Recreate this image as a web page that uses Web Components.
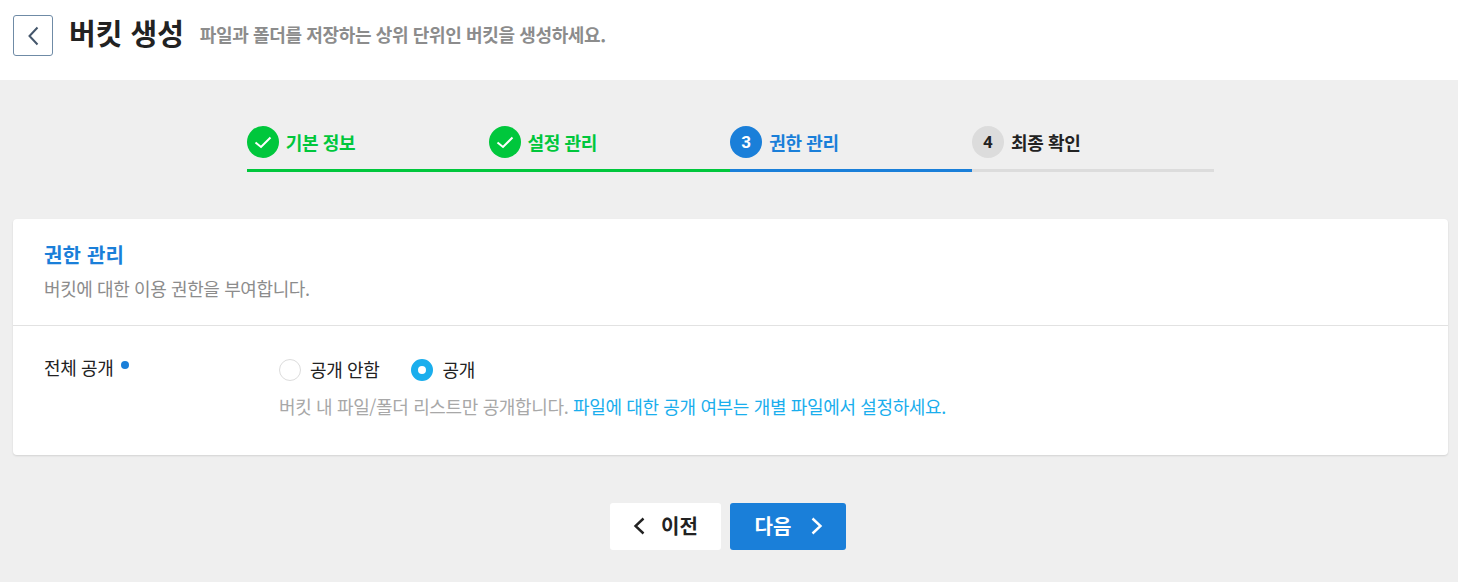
<!DOCTYPE html>
<html lang="ko">
<head>
<meta charset="utf-8">
<title>버킷 생성</title>
<style>
    html, body { margin: 0; padding: 0; }
    body {
        width: 1458px;
        height: 582px;
        overflow: hidden;
        background: #efefef;
        color: #222;
        font-family: "Noto Sans CJK KR", "Noto Sans", sans-serif;
    }
</style>
</head>
<body>
<page-header heading="버킷 생성" sub="파일과 폴더를 저장하는 상위 단위인 버킷을 생성하세요."></page-header>
<step-bar>
    <step-item state="done" num="1">기본 정보</step-item>
    <step-item state="done" num="2">설정 관리</step-item>
    <step-item state="current" num="3">권한 관리</step-item>
    <step-item state="todo" num="4">최종 확인</step-item>
</step-bar>
<form-card heading="권한 관리" sub="버킷에 대한 이용 권한을 부여합니다.">
    <form-row label="전체 공개">
        <radio-item>공개 안함</radio-item>
        <radio-item checked>공개</radio-item>
        <span slot="help">버킷 내 파일/폴더 리스트만 공개합니다. <span style="color:#1aaeed">파일에 대한 공개 여부는 개별 파일에서 설정하세요.</span></span>
    </form-row>
</form-card>
<nav-buttons></nav-buttons>

<script>
class PageHeader extends HTMLElement {
    constructor() {
        super();
        this.attachShadow({ mode: 'open' });
        this.shadowRoot.innerHTML = `
            <style>
                :host {
                    display: flex;
                    align-items: center;
                    height: 80px;
                    box-sizing: border-box;
                    padding: 0 13px 9px;
                    background: #fff;
                }
                .back {
                    display: flex;
                    align-items: center;
                    justify-content: center;
                    width: 40px;
                    height: 41px;
                    box-sizing: border-box;
                    border: 1px solid #6f8ba6;
                    border-radius: 3px;
                    margin-right: 16px;
                }
                h1 {
                    margin: 0 16px 8px 0;
                    font-size: 29px;
                    line-height: 40px;
                    font-weight: 700;
                    color: #222;
                }
                p {
                    margin: 0 0 3px;
                    font-size: 18px;
                    font-weight: 700;
                    letter-spacing: -0.37px;
                    color: #8c8c8c;
                }
            </style>
            <div class="back">
                <svg width="12" height="20" viewBox="0 0 12 20" fill="none" stroke="#44566b" stroke-width="2">
                    <path d="M10.5 1.5 2.5 10l8 8.5"/>
                </svg>
            </div>
            <h1>${this.getAttribute('heading')}</h1>
            <p>${this.getAttribute('sub')}</p>
        `;
    }
}

class StepBar extends HTMLElement {
    constructor() {
        super();
        this.attachShadow({ mode: 'open' });
        this.shadowRoot.innerHTML = `
            <style>
                :host {
                    display: grid;
                    grid-template-columns: repeat(4, 1fr);
                    width: 967px;
                    margin: 46px 0 0 246.75px;
                }
            </style>
            <slot></slot>
        `;
    }
}

class StepItem extends HTMLElement {
    constructor() {
        super();
        const state = this.getAttribute('state');
        const colors = {
            done: ['#00c73c', '#00c73c', '#00c73c'],
            current: ['#1a7fd9', '#1a7fd9', '#1a7fd9'],
            todo: ['#dcdcdc', '#222', '#dcdcdc']
        }[state];
        const mark = state === 'done'
            ? `<svg width="18" height="13" viewBox="0 0 18 13" fill="none" stroke="#fff" stroke-width="2"><path d="M1.5 6.5 7 11 16.5 1.5"/></svg>`
            : this.getAttribute('num');
        this.attachShadow({ mode: 'open' });
        this.shadowRoot.innerHTML = `
            <style>
                :host {
                    display: flex;
                    align-items: center;
                    gap: 7px;
                    height: 46px;
                    padding-bottom: 11px;
                    box-sizing: border-box;
                    border-bottom: 3px solid ${colors[2]};
                    font-size: 18px;
                    font-weight: 700;
                    letter-spacing: -0.38px;
                    color: ${colors[1]};
                }
                .dot {
                    display: flex;
                    align-items: center;
                    justify-content: center;
                    width: 32px;
                    height: 32px;
                    border-radius: 50%;
                    background: ${colors[0]};
                    color: ${state === 'todo' ? '#222' : '#fff'};
                    font-family: "Roboto", sans-serif;
                    font-size: 17px;
                    letter-spacing: 0;
                }
            </style>
            <span class="dot">${mark}</span>
            <slot></slot>
        `;
    }
}

class FormCard extends HTMLElement {
    constructor() {
        super();
        this.attachShadow({ mode: 'open' });
        this.shadowRoot.innerHTML = `
            <style>
                :host {
                    display: block;
                    height: 236px;
                    margin: 47px 10px 0 13px;
                    background: #fff;
                    border-radius: 4px;
                    box-shadow: 0 1px 2px rgba(0,0,0,.12);
                }
                header {
                    height: 107px;
                    box-sizing: border-box;
                    padding: 22px 31px 0;
                    border-bottom: 1px solid #e2e2e2;
                }
                h2 {
                    margin: 0;
                    font-size: 20px;
                    line-height: 28px;
                    font-weight: 700;
                    letter-spacing: 0.2px;
                    color: #1a7fd9;
                }
                p {
                    margin: 6px 0 0;
                    font-size: 18px;
                    line-height: 26px;
                    letter-spacing: -0.4px;
                    color: #8c8c8c;
                }
            </style>
            <header>
                <h2>${this.getAttribute('heading')}</h2>
                <p>${this.getAttribute('sub')}</p>
            </header>
            <slot></slot>
        `;
    }
}

class FormRow extends HTMLElement {
    constructor() {
        super();
        this.attachShadow({ mode: 'open' });
        this.shadowRoot.innerHTML = `
            <style>
                :host {
                    display: grid;
                    grid-template-columns: 235px 1fr;
                    padding: 30px 31px 0;
                    font-size: 18px;
                    letter-spacing: -0.36px;
                    color: #222;
                }
                .label {
                    display: flex;
                    align-items: flex-start;
                    gap: 8px;
                    line-height: 22px;
                }
                .req {
                    width: 8px;
                    height: 8px;
                    margin-top: 5px;
                    border-radius: 50%;
                    background: #1a7fd9;
                }
                .options {
                    display: flex;
                    gap: 32px;
                    height: 28px;
                    align-items: center;
                }
                .help {
                    margin-top: 10px;
                    line-height: 24px;
                    color: #a8a8a8;
                }
            </style>
            <div class="label">${this.getAttribute('label')}<span class="req"></span></div>
            <div>
                <div class="options"><slot></slot></div>
                <div class="help"><slot name="help"></slot></div>
            </div>
        `;
    }
}

class RadioItem extends HTMLElement {
    constructor() {
        super();
        const on = this.hasAttribute('checked');
        this.attachShadow({ mode: 'open' });
        this.shadowRoot.innerHTML = `
            <style>
                :host {
                    display: flex;
                    align-items: center;
                    gap: 9px;
                }
                .mark {
                    width: 22px;
                    height: 22px;
                    box-sizing: border-box;
                    border-radius: 50%;
                    background: #fff;
                    border: ${on ? '7px solid #1aaeed' : '1px solid #dcdcdc'};
                }
                .text { padding-bottom: 2px; }
            </style>
            <span class="mark"></span>
            <span class="text"><slot></slot></span>
        `;
    }
}

class NavButtons extends HTMLElement {
    constructor() {
        super();
        this.attachShadow({ mode: 'open' });
        this.shadowRoot.innerHTML = `
            <style>
                :host {
                    display: flex;
                    justify-content: center;
                    gap: 9px;
                    margin-top: 48px;
                    padding-right: 2px;
                }
                .btn {
                    display: flex;
                    align-items: center;
                    justify-content: center;
                    height: 47px;
                    box-sizing: border-box;
                    border-radius: 3px;
                    font-size: 20px;
                    line-height: 44px;
                    padding-bottom: 1px;
                    font-weight: 700;
                }
                .prev { width: 111px; gap: 16px; background: #fff; color: #222; }
                .next { width: 116px; gap: 20px; padding-left: 2px; background: #1a7fd9; color: #fff; }
            </style>
            <div class="btn prev">
                <svg width="12" height="18" viewBox="0 0 12 18" fill="none" stroke="#222" stroke-width="2.4"><path d="M10.5 1.5 2.5 9l8 7.5"/></svg>
                이전
            </div>
            <div class="btn next">
                다음
                <svg width="12" height="18" viewBox="0 0 12 18" fill="none" stroke="#fff" stroke-width="2.4"><path d="M1.5 1.5 9.5 9l-8 7.5"/></svg>
            </div>
        `;
    }
}

customElements.define('page-header', PageHeader);
customElements.define('step-bar', StepBar);
customElements.define('step-item', StepItem);
customElements.define('form-card', FormCard);
customElements.define('form-row', FormRow);
customElements.define('radio-item', RadioItem);
customElements.define('nav-buttons', NavButtons);
</script>
</body>
</html>
